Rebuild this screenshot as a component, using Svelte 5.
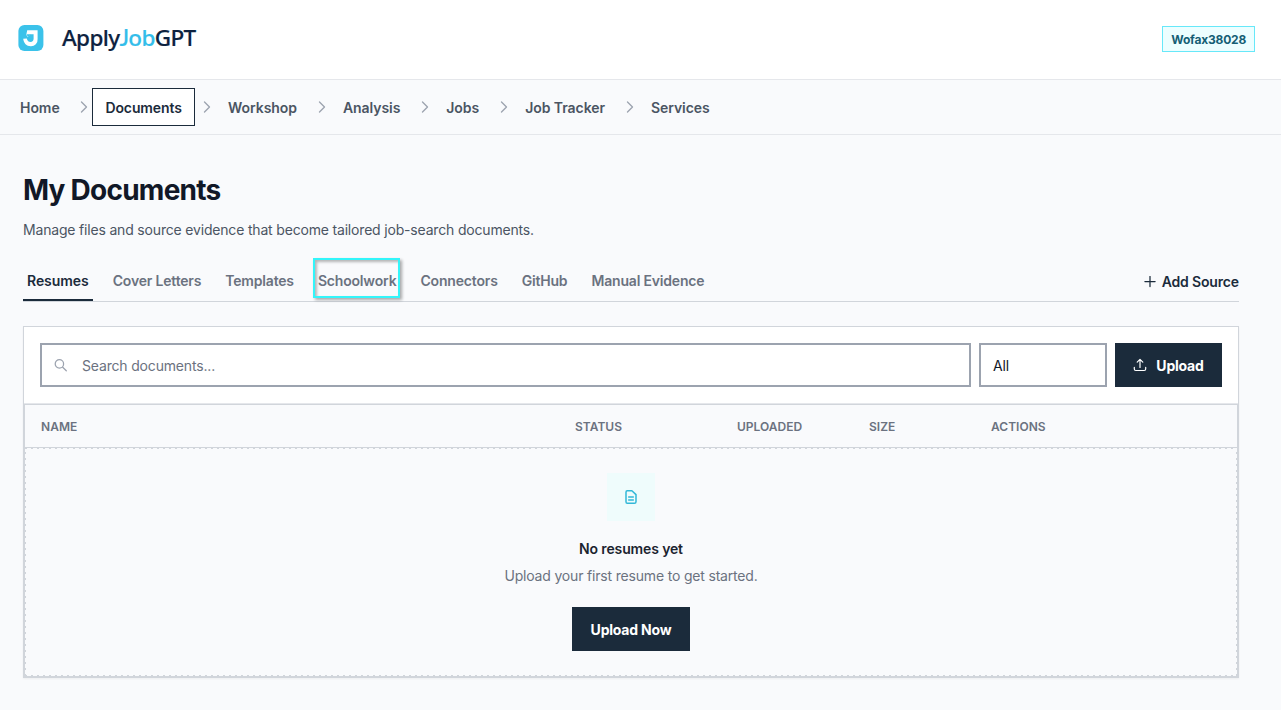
<script>
  const nav = ['Home', 'Documents', 'Workshop', 'Analysis', 'Jobs', 'Job Tracker', 'Services'];
  const tabs = ['Resumes', 'Cover Letters', 'Templates', 'Schoolwork', 'Connectors', 'GitHub', 'Manual Evidence'];
  const columns = ['Name', 'Status', 'Uploaded', 'Size', 'Actions'];
</script>

<div class="page">
  <header>
    <div class="brand">
      <svg class="logo" width="26" height="26" viewBox="0 0 26 26">
        <rect x=".4" width="25" height="26" rx="6" fill="#3bc2ea" />
        <path d="M9.200 5.200H19.600V14a6.600 6.600 0 0 1-6.800 7.200C8.500 21.200 5.700 18.300 5.200 13.800L8.800 13.400C9.300 15.600 10.700 17 12.500 17c2 0 3.100-1.300 3.100-3.200V9.200H12.200L9.700 12.200L8.300 9.800Z" fill="#fff" />
        <path d="M8.600 9.200h4l-2.700 3.100Z" fill="#3bc2ea" />
      </svg>
      <span class="wordmark">Apply<span class="accent"><span class="cap">J</span>ob</span>GPT</span>
    </div>
    <span class="user">Wofax38028</span>
  </header>

  <nav>
    {#each nav as item, i}
      {#if i > 0}
        <svg class="chevron" width="16" height="16" viewBox="0 0 24 24" fill="none" stroke="#9ca3af" stroke-width="2"><path d="m8.250 4.500 7.500 7.500-7.500 7.500" stroke-linecap="round" stroke-linejoin="round" /></svg>
      {/if}
      <a class:active={item === 'Documents'}>{item}</a>
    {/each}
  </nav>

  <main>
    <h1>My Documents</h1>
    <p class="lead">Manage files and source evidence that become tailored job-search documents.</p>

    <div class="tabbar">
      <div class="tabs">
        {#each tabs as tab}
          <span class="tab" class:current={tab === 'Resumes'}>
            {tab}
            {#if tab === 'Schoolwork'}<i class="marker"></i>{/if}
          </span>
        {/each}
      </div>
      <div class="add">
        <svg width="12" height="12" viewBox="0 0 12 12" stroke="#1b2b3b" stroke-width="1.250" stroke-linecap="round"><path d="M6 .4v10.200M.9 5.500h10.200" /></svg>
        Add Source
      </div>
    </div>

    <section class="card">
      <div class="tools">
        <div class="search">
          <svg width="14" height="14" viewBox="0 0 14 14" fill="none" stroke="#9ca3af" stroke-width="1.250" stroke-linecap="round"><circle cx="5.400" cy="5.900" r="4.200" /><path d="m8.700 9.200 3.600 3.600" /></svg>
          <span>Search documents...</span>
        </div>
        <div class="select">All</div>
        <button class="upload">
          <svg width="14" height="14" viewBox="0 0 14 14" fill="none" stroke="#fff" stroke-width="1.200" stroke-linecap="round" stroke-linejoin="round"><path d="M1.300 9.300v1.700c0 1 .6 1.500 1.500 1.500h8.400c.9 0 1.500-.5 1.500-1.500V9.300M7 9.500V1.500M4.200 4.200 7 1.400l2.800 2.800" /></svg>
          <span>Upload</span>
        </button>
      </div>
      <div class="table">
        <div class="head">
          {#each columns as column}<span>{column}</span>{/each}
        </div>
        <div class="empty">
          <div class="tile">
            <svg width="16" height="16" viewBox="0 0 16 16" fill="none" stroke="#32b8d8" stroke-width="1.500" stroke-linejoin="round" stroke-linecap="round"><path d="M4.200 1.700h4.700l4.100 3.900v7.100c0 1-.6 1.600-1.600 1.600H4.200c-1 0-1.200-.6-1.200-1.600V3.300c0-1 .2-1.600 1.200-1.600Z" /><path d="M5.700 8h4.600M5.700 11h4.600" /></svg>
          </div>
          <h2>No resumes yet</h2>
          <p>Upload your first resume to get started.</p>
          <button class="now"><span>Upload Now</span></button>
        </div>
      </div>
    </section>
  </main>
</div>

<style>
  :global(body) { background: #f9fafc; }
  .page { font-family: Inter, sans-serif; color: #111827; height: 710px; overflow: hidden; background: #f9fafc; box-sizing: border-box; font-size: 14px; }
  .page * { box-sizing: border-box; }
  header { height: 80px; background: #fff; border-bottom: 1px solid #e5e7eb; display: flex; align-items: center; justify-content: space-between; padding: 0 26px 0 18px; }
  .brand { display: flex; align-items: center; gap: 18px; margin-top: -3px; }
  .logo { display: block; }
  .wordmark { font: 500 22.500px/30px "Noto Sans", sans-serif; letter-spacing: -0.640px; color: #0d2240; -webkit-text-stroke: .2px; }
  .accent { color: #33bdea; }
  .cap { font-family: Lato, sans-serif; letter-spacing: -.6px; line-height: 1; }
  .user { height: 26px; border: 1px solid #67e8f9; background: #ecfeff; color: #155e75; font-size: 12px; font-weight: 700; line-height: 25px; padding: 0 8px; letter-spacing: -.2px; margin-top: -1px; }
  nav { height: 55px; border-bottom: 1px solid #e5e7eb; display: flex; align-items: center; padding: 0 6px; }
  nav a { height: 38px; line-height: 38px; padding: 0 13px; border: 1px solid transparent; font-size: 14px; font-weight: 600; color: #4b5563; white-space: nowrap; letter-spacing: -.06px; }
  nav a.active { color: #1b2b3b; background: #fff; border-color: #1b2b3b; letter-spacing: -.1px; padding: 0 12.500px 0 12.800px; margin-right: .7px; }
  .chevron { margin: 0 -1px 0 3px; flex: none; }
  .chevron:first-of-type { margin: 0 0 0 2px; }
  main { padding: 37px 42px 0 23px; }
  h1 { margin: 0; font-size: 28px; line-height: 36px; font-weight: 700; letter-spacing: -.760px; color: #111827; }
  .lead { margin: 12px 0 0; line-height: 20px; color: #4b5563; letter-spacing: -.180px; }
  .tabbar { height: 44px; margin-top: 18px; border-bottom: 1px solid #d1d5db; display: flex; justify-content: space-between; }
  .tabs { display: flex; gap: 16px; }
  .tab { position: relative; height: 43px; line-height: 46px; padding: 0 4px; font-weight: 600; color: #6b7280; border-bottom: 2px solid transparent; white-space: nowrap; letter-spacing: -.180px; }
  .tab.current { color: #1b2b3b; border-color: #1b2b3b; letter-spacing: -.06px; }
  .marker { position: absolute; left: 0; width: 87px; margin-left: -1px; top: 0; height: 40px; border: 2px solid #33f5fa; box-shadow: 2px 2px 3px rgba(0,0,0,.33), inset 2px 2px 3px rgba(0,0,0,.28); }
  .add { display: flex; align-items: center; gap: 6px; font-weight: 600; color: #1b2b3b; padding-top: 4px; letter-spacing: -.150px; }
  .card { margin-top: 24px; height: 352px; border: 1px solid #d1d5db; background: #fff; box-shadow: 0 1px 2px rgba(0,0,0,.05); }
  .tools { height: 77px; border-bottom: 1px solid #e5e7eb; padding: 16px; display: flex; gap: 8px; }
  .search { flex: 1; height: 44px; border: 2px solid #9ca3af; display: flex; align-items: center; gap: 14px; padding-left: 12px; color: #6b7280; letter-spacing: -.170px; }
  .select { width: 128px; height: 44px; border: 2px solid #9ca3af; line-height: 42px; padding-left: 12px; color: #111827; letter-spacing: -.150px; }
  button { border: 0; background: #1b2b3b; color: #fff; height: 44px; font: 700 14px/20px Inter, sans-serif; padding: 0; display: flex; align-items: center; justify-content: center; letter-spacing: -.200px; }
  button span { padding-top: 2px; }
  .upload { width: 107px; gap: 9px; }
  .table { border: 1px solid #d1d5db; height: 273px; background: #f9fafc; }
  .head { height: 43px; border-bottom: 1px solid #d1d5db; display: grid; grid-template-columns: 534px 162px 132px 122px 1fr; padding-left: 16px; font-size: 12px; font-weight: 600; line-height: 43px; text-transform: uppercase; color: #6b7280; letter-spacing: .02px; }
  .empty { height: 228px; display: flex; flex-direction: column; align-items: center; padding-top: 25px;
    --dash: #d1d5db 0 2px, transparent 2px 6px;
    background: repeating-linear-gradient(90deg, var(--dash)) 0 0 / 100% 1px no-repeat, repeating-linear-gradient(90deg, var(--dash)) 0 100% / 100% 1px no-repeat, repeating-linear-gradient(0deg, var(--dash)) 0 0 / 1px 100% no-repeat, repeating-linear-gradient(0deg, var(--dash)) 100% 0 / 1px 100% no-repeat; }
  .tile { width: 48px; height: 48px; background: #effcfc; display: flex; align-items: center; justify-content: center; }
  h2 { margin: 18px 0 0; font-size: 14px; line-height: 20px; font-weight: 600; color: #1b2430; letter-spacing: -.140px; }
  .empty p { margin: 7px 0 0; line-height: 20px; color: #6b7280; letter-spacing: -.180px; }
  .now { width: 118px; margin-top: 21px; }
</style>
